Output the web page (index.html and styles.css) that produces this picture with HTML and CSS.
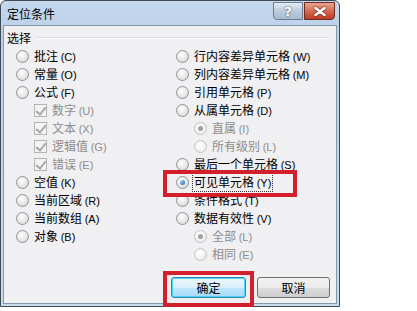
FILE: index.html
```html
<!DOCTYPE html>
<html lang="zh-CN">
<head>
  <meta charset="UTF-8" />
  <title>定位条件</title>
  <link rel="stylesheet" href="styles.css">
</head>
<body>
  <div class="dialog">
    <div class="titlebar">
      <span class="title">定位条件</span>
      <div class="capbtns">
        <div class="capbtn help">?</div>
        <div class="capbtn close">
          <svg width="12" height="9" viewBox="0 0 12 9"><path d="M1.5 1 L10.5 8 M10.5 1 L1.5 8" stroke="#fff" stroke-width="2.4" stroke-linecap="round"/></svg>
        </div>
      </div>
    </div>
    <div class="client">
      <div class="group"><span>选择</span><i class="line"></i></div>
      <div class="cols">
        <ul class="col">
          <li><b class="radio"></b><span>批注 <em>(C)</em></span></li>
          <li><b class="radio"></b><span>常量 <em>(O)</em></span></li>
          <li><b class="radio"></b><span>公式 <em>(F)</em></span></li>
          <li class="sub off"><b class="check"></b><span>数字 <em>(U)</em></span></li>
          <li class="sub off"><b class="check"></b><span>文本 <em>(X)</em></span></li>
          <li class="sub off"><b class="check"></b><span>逻辑值 <em>(G)</em></span></li>
          <li class="sub off"><b class="check"></b><span>错误 <em>(E)</em></span></li>
          <li><b class="radio"></b><span>空值 <em>(K)</em></span></li>
          <li><b class="radio"></b><span>当前区域 <em>(R)</em></span></li>
          <li><b class="radio"></b><span>当前数组 <em>(A)</em></span></li>
          <li><b class="radio"></b><span>对象 <em>(B)</em></span></li>
        </ul>
        <ul class="col">
          <li><b class="radio"></b><span>行内容差异单元格 <em>(W)</em></span></li>
          <li><b class="radio"></b><span>列内容差异单元格 <em>(M)</em></span></li>
          <li><b class="radio"></b><span>引用单元格 <em>(P)</em></span></li>
          <li><b class="radio"></b><span>从属单元格 <em>(D)</em></span></li>
          <li class="sub off"><b class="radio on"></b><span>直属 <em>(I)</em></span></li>
          <li class="sub off"><b class="radio"></b><span>所有级别 <em>(L)</em></span></li>
          <li><b class="radio"></b><span>最后一个单元格 <em>(S)</em></span></li>
          <li><b class="radio on"></b><span class="focus">可见单元格 <em>(Y)</em></span></li>
          <li><b class="radio"></b><span>条件格式 <em>(T)</em></span></li>
          <li><b class="radio"></b><span>数据有效性 <em>(V)</em></span></li>
          <li class="sub off"><b class="radio on"></b><span>全部 <em>(L)</em></span></li>
          <li class="sub off"><b class="radio"></b><span>相同 <em>(E)</em></span></li>
        </ul>
      </div>
      <div class="footer">
        <button class="btn ok">确定</button>
        <button class="btn">取消</button>
      </div>
    </div>
    <div class="mark mark-row"></div>
    <div class="mark mark-ok"></div>
  </div>
</body>
</html>
```

FILE: styles.css
```css
*{
  margin: 0;
  padding: 0;
  box-sizing: border-box;
}
body{
  background: #fff;
  font-family: "Noto Sans CJK SC", "Liberation Sans", sans-serif;
  font-size: 12px;
  color: #000;
}
.dialog{
  position: relative;
  width: 340px;
  height: 307px;
  border: 1px solid #404a55;
  border-radius: 6px 6px 0 0;
  background: linear-gradient(#c3d7ed, #bcd2ea 30px, #c6dcec);
  display: flex;
  flex-direction: column;
}
.titlebar{
  height: 24px;
  display: flex;
  align-items: flex-start;
  justify-content: space-between;
  padding-left: 6px;
}
.title{
  line-height: 26px;
  color: #000;
}
.capbtns{
  display: flex;
  margin-top: 1px;
  margin-right: 4px;
}
.capbtn{
  width: 30px;
  height: 18px;
  border: 1px solid #6d7e92;
  display: flex;
  align-items: center;
  justify-content: center;
}
.help{
  border-radius: 0 0 0 4px;
  background: linear-gradient(#e2ebf5, #bccbdc 50%, #a9bbd0);
  color: #fff;
  font-family: "DejaVu Sans", sans-serif;
  font-weight: bold;
  font-size: 13px;
  text-shadow: 0 0 2px #334;
  margin-right: 1px;
}
.close{
  width: 31px;
  border-color: #6e2b22;
  border-radius: 0 0 4px 0;
  background: linear-gradient(#e9a593, #d46a50 50%, #c03c22);
}
.close svg{
  filter: drop-shadow(0 0 1px #5a1b10);
}
.client{
  flex: 1;
  margin: 0 2px 2px;
  background: #f0eff1;
  border: 1px solid #8597ad;
  display: flex;
  flex-direction: column;
}
.group{
  display: flex;
  align-items: center;
  padding: 5px 6px 0 3px;
  line-height: 14px;
}
.group .line{
  flex: 1;
  height: 2px;
  margin-left: 6px;
  border-top: 1px solid #d5dfe5;
  border-bottom: 1px solid #fff;
}
.cols{
  display: flex;
  padding: 2px 0 0 12px;
}
.col{
  list-style: none;
  width: 160px;
}
.col li{
  height: 18px;
  display: flex;
  align-items: center;
  white-space: pre;
}
.col li span{
  line-height: 16px;
}
.col li.sub{
  padding-left: 18px;
}
.col em{
  font-style: normal;
  font-family: "Liberation Sans", sans-serif;
  font-size: 11px;
}
.off{
  color: #8d8d8d;
}
.radio{
  width: 13px;
  height: 13px;
  border-radius: 50%;
  border: 1px solid #8f9497;
  background: radial-gradient(circle at 40% 35%, #fff, #e6e6e6 55%, #cfcfcf);
  margin-right: 5px;
  flex: none;
  display: flex;
  align-items: center;
  justify-content: center;
}
.radio.on::after{
  content: "";
  width: 5px;
  height: 5px;
  border-radius: 50%;
  background: radial-gradient(circle at 35% 35%, #9cc9f0, #1c5fa8);
}
.off .radio{
  border-color: #c0c3c5;
  background: radial-gradient(circle at 40% 35%, #fff, #f0f0f0 60%, #e2e2e2);
}
.off .radio.on::after{
  background: #a0a0a0;
}
.check{
  width: 13px;
  height: 13px;
  border: 1px solid #b4b4b4;
  background: #f4f4f4;
  margin-right: 5px;
  flex: none;
  position: relative;
}
.check::after{
  content: "";
  position: absolute;
  left: 3px;
  top: 0;
  width: 4px;
  height: 8px;
  border: solid #a9a9a9;
  border-width: 0 2px 2px 0;
  transform: rotate(40deg);
}
.col li .focus{
  outline: 1px dotted #333;
  padding: 0 1px;
  margin-left: -1px;
}
.footer{
  display: flex;
  justify-content: flex-end;
  gap: 11px;
  padding: 14px 6px 0 0;
}
.btn{
  width: 73px;
  height: 21px;
  font-family: inherit;
  font-size: 12px;
  border: 1px solid #707070;
  border-radius: 3px;
  background: linear-gradient(#f2f2f2, #ebebeb 50%, #dddddd 51%, #cfcfcf);
  color: #000;
}
.btn.ok{
  width: 75px;
  border-color: #3c7fb1;
  box-shadow: inset 0 0 0 1px #48d8fb;
  background: linear-gradient(#eaf6fd, #d9f0fc 50%, #bee6fd 51%, #a7d9f5);
}
.mark{
  position: absolute;
  border: 4px solid #d31f2b;
}
.mark-row{
  left: 162px;
  top: 169px;
  width: 134px;
  height: 27px;
}
.mark-ok{
  left: 162px;
  top: 270px;
  width: 91px;
  height: 36px;
}
```
